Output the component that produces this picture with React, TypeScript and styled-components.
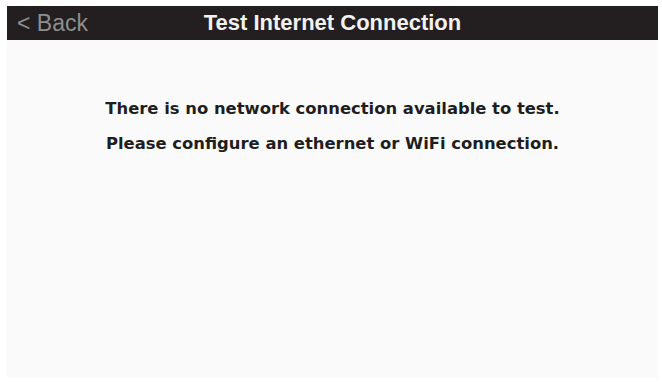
import styled, { createGlobalStyle } from "styled-components";

const GlobalStyle = createGlobalStyle`
  html, body {
    margin: 0;
    padding: 0;
    background: #ffffff;
  }
  body {
    font-family: "Liberation Sans", Arial, sans-serif;
  }
`;

const Screen = styled.div`
  width: 662px;
  height: 382px;
  box-sizing: border-box;
  padding: 6px 4px 4px 7px;
  display: flex;
  flex-direction: column;
  background: #ffffff;
`;

const Panel = styled.div`
  flex: 1;
  display: flex;
  flex-direction: column;
  background: #fafafa;
`;

const TitleBar = styled.div`
  height: 34px;
  background: #231f20;
  display: grid;
  grid-template-columns: 1fr auto 1fr;
  align-items: center;
  padding: 0 10px;
`;

const BackButton = styled.span`
  justify-self: start;
  color: #8e8e8e;
  font-size: 23px;
  font-family: "Liberation Sans", Arial, sans-serif;
`;

const Title = styled.h1`
  margin: 0;
  color: #f2f2f2;
  font-size: 22px;
  font-weight: bold;
  font-family: "Liberation Sans", Arial, sans-serif;
`;

const Message = styled.div`
  padding-top: 57px;
  display: flex;
  flex-direction: column;
  align-items: center;
  gap: 11px;
`;

const Line = styled.p`
  margin: 0;
  color: #1e1e1e;
  font-family: "DejaVu Sans", Verdana, sans-serif;
  font-weight: bold;
  font-size: 16.4px;
  line-height: 24px;
`;

export default function App() {
  return (
    <Screen>
      <GlobalStyle />
      <Panel>
        <TitleBar>
          <BackButton>&lt; Back</BackButton>
          <Title>Test Internet Connection</Title>
          <span />
        </TitleBar>
        <Message>
          <Line>There is no network connection available to test.</Line>
          <Line>Please configure an ethernet or WiFi connection.</Line>
        </Message>
      </Panel>
    </Screen>
  );
}
